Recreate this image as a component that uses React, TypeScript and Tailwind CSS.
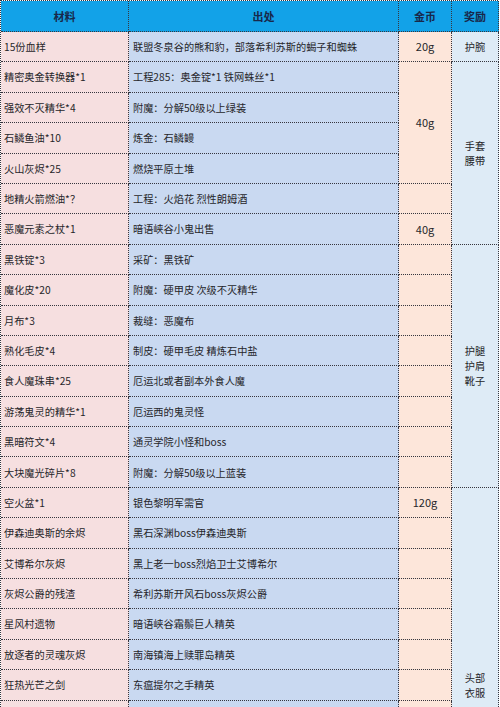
import React from "react";

const rows: [string, string][] = [
  ["15份血样", "联盟冬泉谷的熊和豹，部落希利苏斯的蝎子和蜘蛛"],
  ["精密奥金转换器*1", "工程285：奥金锭*1 铁网蛛丝*1"],
  ["强效不灭精华*4", "附魔：分解50级以上绿装"],
  ["石鳞鱼油*10", "炼金：石鳞鳗"],
  ["火山灰烬*25", "燃烧平原土堆"],
  ["地精火箭燃油*？", "工程：火焰花 烈性朗姆酒"],
  ["恶魔元素之杖*1", "暗语峡谷小鬼出售"],
  ["黑铁锭*3", "采矿：黑铁矿"],
  ["魔化皮*20", "附魔：硬甲皮 次级不灭精华"],
  ["月布*3", "裁缝：恶魔布"],
  ["熟化毛皮*4", "制皮：硬甲毛皮 精炼石中盐"],
  ["食人魔珠串*25", "厄运北或者副本外食人魔"],
  ["游荡鬼灵的精华*1", "厄运西的鬼灵怪"],
  ["黑暗符文*4", "通灵学院小怪和boss"],
  ["大块魔光碎片*8", "附魔：分解50级以上蓝装"],
  ["空火盆*1", "银色黎明军需官"],
  ["伊森迪奥斯的余烬", "黑石深渊boss伊森迪奥斯"],
  ["艾博希尔灰烬", "黑上老一boss烈焰卫士艾博希尔"],
  ["灰烬公爵的残渣", "希利苏斯开风石boss灰烬公爵"],
  ["星风村遗物", "暗语峡谷霜鬃巨人精英"],
  ["放逐者的灵魂灰烬", "南海镇海上赎罪岛精英"],
  ["狂热光芒之剑", "东瘟提尔之手精英"],
  ["", ""],
  ["", ""],
  ["", ""],
  ["", ""],
  ["", ""],
  ["", ""],
];

const border = "border-r border-b border-dotted border-[#36363e]";

type Span = { start: number; span: number; text: string };

const gold: Span[] = [
  { start: 0, span: 1, text: "20g" },
  { start: 1, span: 4, text: "40g" },
  { start: 5, span: 1, text: "" },
  { start: 6, span: 1, text: "40g" },
  ...Array.from({ length: 8 }, (_, i) => ({ start: 7 + i, span: 1, text: "" })),
  { start: 15, span: 1, text: "120g" },
  ...Array.from({ length: 12 }, (_, i) => ({ start: 16 + i, span: 1, text: "" })),
];

const reward: Span[] = [
  { start: 0, span: 1, text: "护腕" },
  { start: 1, span: 6, text: "手套\n腰带" },
  { start: 7, span: 8, text: "护腿\n护肩\n靴子" },
  { start: 15, span: 13, text: "头部\n衣服" },
];

const rowStartClass = [
  "row-start-2", "row-start-3", "row-start-4", "row-start-5", "row-start-6", "row-start-7",
  "row-start-8", "row-start-9", "row-start-10", "row-start-11", "row-start-12", "row-start-13",
  "row-start-14", "row-start-15", "row-start-16", "row-start-17", "row-start-18", "row-start-19",
  "row-start-20", "row-start-21", "row-start-22", "row-start-23", "row-start-24", "row-start-25",
  "row-start-26", "row-start-27", "row-start-28", "row-start-29",
];
const rowSpanClass: Record<number, string> = {
  1: "row-span-1",
  4: "row-span-4",
  6: "row-span-6",
  8: "row-span-8",
  13: "row-span-13",
};

export default function App() {
  return (
    <div
      className="w-[500px] h-[707px] overflow-hidden bg-white text-[#26262a]"
      style={{ fontFamily: '"Noto Sans CJK SC", "Noto Sans", sans-serif' }}
    >
      <div className="grid w-[498px] grid-cols-[128px_270px_53px_47px] grid-rows-[31px_repeat(28,30.4px)] border-l border-t border-dotted border-[#36363e] bg-white">
        {/* header */}
        <div className={`col-start-1 row-start-1 bg-[#12a2e8] flex items-center justify-center text-[11px] font-bold text-[#18284a] ${border}`}>材料</div>
        <div className={`col-start-2 row-start-1 bg-[#12a2e8] flex items-center justify-center text-[11px] font-bold text-[#18284a] ${border}`}>出处</div>
        <div className={`col-start-3 row-start-1 bg-[#12a2e8] flex items-center justify-center text-[11px] font-bold text-[#18284a] ${border}`}>金币</div>
        <div className={`col-start-4 row-start-1 bg-[#12a2e8] flex items-center justify-center text-[11px] font-bold text-[#18284a] ${border}`}>奖励</div>

        {rows.map(([a, b], i) => (
          <React.Fragment key={i}>
            <div className={`col-start-1 ${rowStartClass[i]} bg-[#f6dfe0] flex items-center pl-[3px] text-[10.2px] whitespace-nowrap ${border}`}>{a}</div>
            <div className={`col-start-2 ${rowStartClass[i]} bg-[#c9d9f1] flex items-center pl-[4px] text-[10.2px] whitespace-nowrap ${border}`}>{b}</div>
          </React.Fragment>
        ))}

        {gold.map((g, i) => (
          <div
            key={`g${i}`}
            className={`col-start-3 ${rowStartClass[g.start]} ${rowSpanClass[g.span]} bg-[#fde6da] flex items-center justify-center text-[11px] ${border}`}
          >
            {g.text}
          </div>
        ))}

        {reward.map((r, i) => (
          <div
            key={`r${i}`}
            className={`col-start-4 ${rowStartClass[r.start]} ${rowSpanClass[r.span]} bg-[#deebf6] flex items-center justify-center text-center text-[10.2px] leading-[15px] whitespace-pre-line ${border}`}
          >
            {r.text}
          </div>
        ))}
      </div>
    </div>
  );
}
